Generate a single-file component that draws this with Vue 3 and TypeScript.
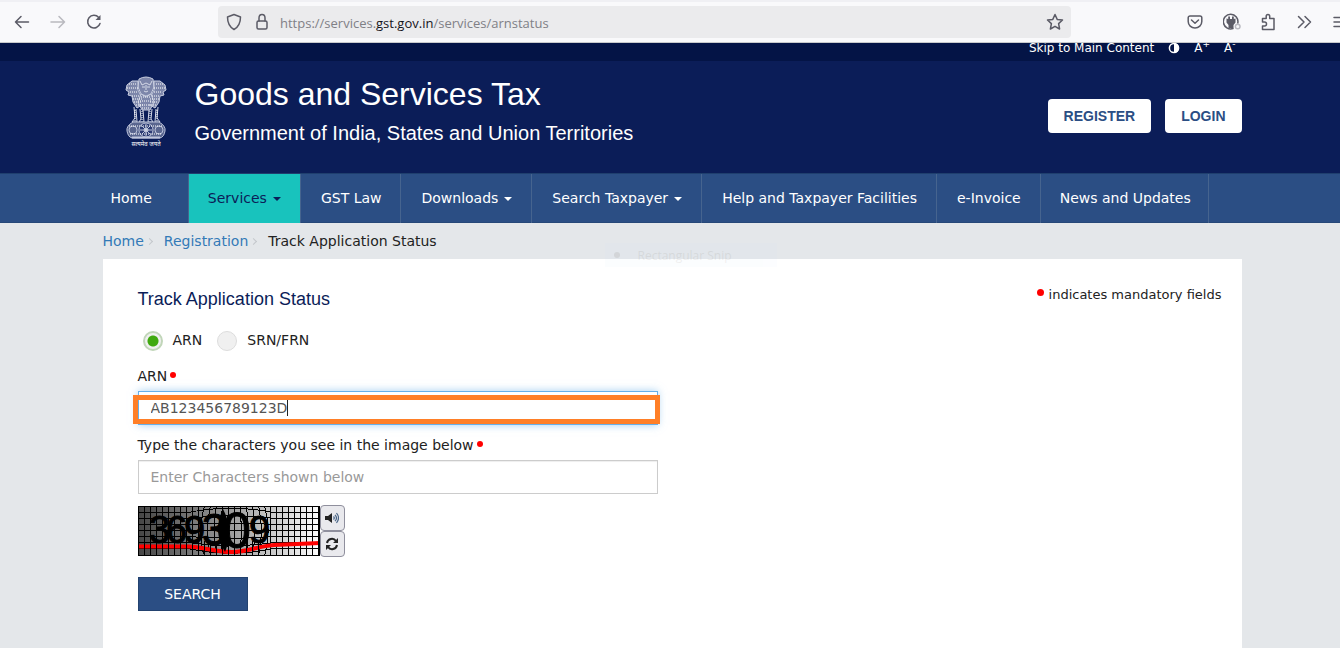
<script setup lang="ts">
import { ref } from 'vue'

interface NavItem {
  label: string
  menu?: boolean
  active?: boolean
}

const navItems: NavItem[] = [
  { label: 'Home' },
  { label: 'Services', menu: true, active: true },
  { label: 'GST Law' },
  { label: 'Downloads', menu: true },
  { label: 'Search Taxpayer', menu: true },
  { label: 'Help and Taxpayer Facilities' },
  { label: 'e-Invoice' },
  { label: 'News and Updates' },
]

const kind = ref<'arn' | 'srn'>('arn')
const arn = ref('AB123456789123D')
const captcha = ref('')

const gridX: number[] = Array.from({ length: 29 }, (_, i) => i * 6 + 6)
const gridY: number[] = Array.from({ length: 7 }, (_, i) => i * 6 + 6)
</script>

<template>
  <div class="screen">
    <div class="browser">
      <div class="tools">
        <button class="tool" aria-label="Back">
          <svg width="16" height="16" viewBox="0 0 16 16"><path d="M14.500 8H1.500M7 2.500L1.500 8L7 13.500" /></svg>
        </button>
        <button class="tool off" aria-label="Forward">
          <svg width="16" height="16" viewBox="0 0 16 16"><path d="M1 8h13.500M9 2.500L14.500 8L9 13.500" /></svg>
        </button>
        <button class="tool" aria-label="Reload">
          <svg width="16" height="16" viewBox="0 0 16 16">
            <path d="M14 9.500A6.300 6.300 0 1 1 12.700 3.500" /><path d="M14.500 1v5h-5z" class="solid" />
          </svg>
        </button>
      </div>
      <div class="address">
        <svg width="16" height="18" viewBox="0 0 16 18"><path d="M8 1.500L14.500 4C14.500 10 12.500 14 8 16.500C3.500 14 1.500 10 1.500 4Z" /></svg>
        <svg width="16" height="18" viewBox="0 0 16 18">
          <rect x="3" y="8" width="10" height="8" rx="1.500" /><path d="M5 8V5a3 3.500 0 0 1 6 0v3" />
        </svg>
        <span class="url">https://services.<b>gst.gov.in</b>/services/arnstatus</span>
        <svg class="star" width="18" height="18" viewBox="0 0 18 18">
          <path d="M9 1.500L11.200 6.400L16.500 7L12.600 10.600L13.600 16L9 13.300L4.400 16L5.400 10.600L1.500 7L6.800 6.400Z" />
        </svg>
      </div>
      <div class="extras">
        <svg width="16" height="16" viewBox="0 0 16 16">
          <path d="M3 2h10a1.800 1.800 0 0 1 1.800 1.800V7.500a6.800 6.500 0 0 1-13.600 0V3.800A1.800 1.800 0 0 1 3 2zM4.500 6L8 9.300L11.500 6" />
        </svg>
        <svg width="18" height="18" viewBox="0 0 18 18">
          <path d="M14.800 10A7.300 7.300 0 1 0 10 15.500" />
          <path d="M3.500 5.500L5.200 6V3.500h1.800v2.500h2V3.500h1.800V6l1.700-.5V9.500L10.500 12v3H5.500v-3L3.500 9.500z" class="solid" />
          <circle cx="14.700" cy="13.500" r="2.300" class="dot" />
        </svg>
        <svg width="16" height="18" viewBox="0 0 16 18">
          <path d="M1.500 9V5.500h3.700V3.300a1.700 1.700 0 0 1 3.500 0v2.200H13v11H1.500V13h2a1.900 1.900 0 0 0 0-4z" />
        </svg>
        <svg width="16" height="16" viewBox="0 0 16 16"><path d="M1.500 2.500L7 8L1.500 13.500M8 2.500L13.500 8L8 13.500" /></svg>
        <svg width="16" height="16" viewBox="0 0 16 16"><path d="M1 3.500h14M1 8h14M1 12.500h14" /></svg>
      </div>
    </div>

    <div class="page">
      <div class="topbar">
        <div class="wrap topline">
          <a href="#main">Skip to Main Content</a>
          <svg width="12" height="12" viewBox="0 0 12 12">
            <circle cx="6" cy="6" r="4.600" fill="none" stroke="#fff" stroke-width="1.500" /><path d="M6 1a5 5 0 0 1 0 10z" fill="#fff" />
          </svg>
          <a href="#larger">A<sup>+</sup></a>
          <a href="#smaller">A<sup>-</sup></a>
        </div>
      </div>

      <header class="head">
        <div class="wrap brandline">
          <svg class="emblem" width="44" height="72" viewBox="0 0 44 72" role="img" aria-label="Emblem of India">
            <g fill="#7d86aa" stroke="#c9cee0" stroke-width="1">
              <path d="M15 3Q22-1 29 3L30 11L27 18L22 20L17 18L14 11Z" />
              <path d="M14 5L8 5L3 9L2 14L5 16L4 19L8 20L9 26L13 32L18 29L17 20L14 14Z" />
              <path d="M30 5L36 5L41 9L42 14L39 16L40 19L36 20L35 26L31 32L26 29L27 20L30 14Z" />
              <path d="M17 18L14 26L18 34H26L30 26L27 18L22 21Z" />
            </g>
            <g fill="none" stroke="#d5d9e7" stroke-width="1">
              <path d="M16 5L18 9L22 7L26 9L28 5M18 11h3M23 11h3M20 15Q22 17 24 15M22 9v5" />
              <path d="M10 31L11 42L8 46H13L12 33M16 33L17 43L15 46H20L19 34M25 34L24 46H29L27 43L28 33M32 33L31 46H36L33 42L34 31" />
            </g>
            <g fill="#5a668f" stroke="#b9c0d8" stroke-width="1">
              <path d="M9 46H35Q42 50 41 55Q40 61 36 62H8Q4 61 3 55Q2 50 9 46Z" />
              <circle cx="9" cy="54" r="4" /><circle cx="35" cy="54" r="4" />
              <circle cx="22" cy="54" r="7" fill="#2c3b73" />
              <path d="M22 48v12M16 54h12M18 50l8 8M26 50l-8 8" fill="none" />
              <circle cx="22" cy="54" r="2" fill="#c9cee0" />
              <path d="M8 61H36V62H8Z" fill="#d8dcea" />
            </g>
            <g fill="none" stroke="#fff" stroke-width="1" stroke-dasharray="1 1">
              <path d="M5 8L12 8M3 12H14M6 16H14M8 20H16M9 23H18M10 26H18M12 29H19" />
              <path d="M32 8H39M30 12H41M30 16H38M28 20H36M26 23H35M26 26H34M25 29H32" />
              <path d="M17 21H27M16 25H28M16 29H28M18 32H26M11 34V45M18 35V45M26 35V45M33 34V45M5 50H39M6 58H38" />
            </g>
            <text x="22" y="70" text-anchor="middle" class="motto">सत्यमेव जयते</text>
          </svg>
          <div class="titles">
            <h1>Goods and Services Tax</h1>
            <p>Government of India, States and Union Territories</p>
          </div>
          <div class="account">
            <button>REGISTER</button>
            <button>LOGIN</button>
          </div>
        </div>
      </header>

      <nav class="nav">
        <div class="wrap menu">
          <a v-for="item in navItems" :key="item.label" href="#" :class="{ active: item.active }">
            {{ item.label }}<i v-if="item.menu" class="caret"></i>
          </a>
        </div>
      </nav>

      <main id="main" class="wrap">
        <div class="crumbs">
          <a href="#">Home</a><i class="chevron"></i><a href="#">Registration</a><i class="chevron"></i><span>Track Application Status</span>
        </div>
        <div class="ghost"><i></i><span>Rectangular Snip</span></div>

        <form class="card" @submit.prevent>
          <div class="cardhead">
            <h2>Track Application Status</h2>
            <p class="note"><i class="req big"></i>indicates mandatory fields</p>
          </div>
          <div class="radios">
            <label><input v-model="kind" type="radio" name="kind" value="arn" /><span>ARN</span></label>
            <label><input v-model="kind" type="radio" name="kind" value="srn" /><span>SRN/FRN</span></label>
          </div>
          <label class="lab" for="arn">ARN<i class="req"></i></label>
          <div class="field">
            <input id="arn" v-model="arn" class="focused" type="text" />
            <i class="cursor"></i>
            <i class="frame"></i>
          </div>
          <label class="lab second" for="captcha">Type the characters you see in the image below<i class="req"></i></label>
          <div class="field">
            <input id="captcha" v-model="captcha" type="text" placeholder="Enter Characters shown below" />
          </div>
          <div class="captcha">
            <svg width="182" height="50" viewBox="0 0 182 50" role="img" aria-label="Captcha">
              <defs>
                <linearGradient id="shade"><stop offset="0" stop-color="#454545" /><stop offset=".5" stop-color="#999" /><stop offset="1" stop-color="#fff" /></linearGradient>
              </defs>
              <rect width="182" height="50" fill="url(#shade)" />
              <g stroke="#000" stroke-width="1" fill="none" shape-rendering="crispEdges">
                <path v-for="x in gridX" :key="'x' + x" :d="x > 60 && x < 130 ? `M${x + .5} 0Q${x + (x - 95) / 4} 25 ${x + .5} 50` : `M${x + .5} 0V50`" />
                <path v-for="y in gridY" :key="'y' + y" :d="`M0 ${y + .5}H50Q92 ${y + (y - 22) / 2} 136 ${y + .5}H182`" />
              </g>
              <path d="M0 40.500H50C65 41 78 46 94 46S120 40 136 39L182 37" fill="none" stroke="#f00" stroke-width="4" />
              <g stroke="#000" stroke-width="1" shape-rendering="crispEdges"><path v-for="x in gridX.slice(0, 20)" :key="'r' + x" :d="`M${x + .5} 35v13`" /></g>
              <text class="digits" y="37" font-size="38">
                <tspan x="11">3</tspan><tspan x="28">6</tspan><tspan x="46">9</tspan><tspan x="64" y="39" font-size="44">3</tspan><tspan x="85" y="42" font-size="50">0</tspan><tspan x="111" y="37" font-size="38">9</tspan>
              </text>
              <path d="M85 3Q96 24 87 46Q74 25 85 3" fill="#000" />
              <path d="M0 .5H182M0 49.500H182M.5 0V50" stroke="#000" stroke-width="1" /><path d="M181 0V50" stroke="#000" stroke-width="2" />
            </svg>
            <div class="captools">
              <button type="button" aria-label="Play audio">
                <svg width="14" height="12" viewBox="0 0 14 12">
                  <path d="M0 4h3L7 1v10L3 8H0z" fill="#222" />
                  <path d="M8.500 4.500q1.500 1.500 0 3M10 2.800q3 3.200 0 6.400M11.500 1q4 5 0 10" fill="none" stroke="#4a6688" stroke-width="1.200" />
                </svg>
              </button>
              <button type="button" aria-label="Refresh">
                <svg width="14" height="14" viewBox="0 0 14 14">
                  <path d="M2 6a5 5 0 0 1 9-2M12 8a5 5 0 0 1-9 2" fill="none" stroke="#222" stroke-width="2" />
                  <path d="M13 1v5H8zM1 13V8h5z" fill="#222" />
                </svg>
              </button>
            </div>
          </div>
          <button class="search" type="submit">SEARCH</button>
        </form>
      </main>
    </div>
  </div>
</template>

<style>
body { margin: 0; background: #e4e7ea; }
</style>

<style scoped>
* { box-sizing: border-box; }
.screen {
  display: flex; flex-direction: column; height: 100vh; overflow: hidden;
  font: 14px/20px Verdana, "DejaVu Sans", sans-serif; color: #222; background: #e4e7ea;
}
h1, h2, p { margin: 0; font-weight: 400; }
a { text-decoration: none; }
button { font: inherit; cursor: pointer; }
.browser {
  flex: none; position: relative; z-index: 2; display: flex; align-items: center; height: 43px; padding: 0 0 0 14px;
  background: #f9f9fb; border-top: 2px solid #f0f0f4; border-bottom: 1px solid #c8cacc;
}
.browser svg { flex: none; fill: none; stroke: #5b5b66; stroke-width: 1.5; stroke-linejoin: round; stroke-linecap: round; }
.browser .solid { fill: #5b5b66; stroke: none; }
.browser .dot { fill: #f9f9fb; stroke: #b9b9c0; }
.tools { flex: none; display: flex; gap: 20px; width: 204px; }
.tool { display: flex; padding: 0; border: 0; background: none; }
.off { opacity: .4; }
.address {
  flex: 1; display: flex; align-items: center; gap: 12px; height: 32px; padding: 0 7px 0 8px;
  background: #ebebed; border-radius: 4px;
}
.url { font: 13px/20px "Segoe UI", "Open Sans", sans-serif; color: #808086; margin-left: -2px; padding-top: 2px; }
.url b { font-weight: 400; color: #15141a; }
.address .star { margin-left: auto; }
.extras { flex: none; display: flex; align-items: center; gap: 20px; width: 269px; padding-left: 116px; overflow: hidden; }

.page { flex: 1; min-height: 0; display: flex; flex-direction: column; }
.wrap { width: 85%; margin: 0 auto; position: relative; left: 2px; }
.topbar { flex: none; height: 18px; background: #041446; }
.topline { display: flex; justify-content: flex-end; align-items: center; gap: 14px; height: 10px; padding-right: 6px; font-size: 12px; line-height: 12px; }
.topline a { color: #fff; white-space: nowrap; }
.topline sup { font-size: 9px; line-height: 0; }
.head { flex: none; height: 112px; background: #0b1d58; }
.brandline { display: flex; align-items: flex-start; padding-top: 15px; }
.emblem { flex: none; margin-left: 21px; }
.motto { font: 6px "Noto Sans Devanagari", "Noto Sans", sans-serif; fill: #fff; }
.titles { margin-left: 27px; color: #fff; font-family: Arial, "Liberation Sans", sans-serif; }
.titles h1 { font-size: 32px; line-height: 36px; }
.titles p { font-size: 20px; line-height: 24px; margin-top: 9px; }
.account { margin: 23px 0 0 auto; display: flex; gap: 14px; }
.account button {
  height: 34px; padding: 0 16px; border: 0; border-radius: 4px; background: #fff; color: #2b4e84;
  font: bold 14px/34px Arial, "Liberation Sans", sans-serif;
}
.nav { flex: none; height: 50px; background: #2b4e84; border-top: 1px solid #1f3f6e; border-bottom: 1px solid #264878; }
.menu { display: flex; }
.menu a { height: 49px; padding: 0 19px 0 20px; line-height: 49px; color: #fff; border-right: 1px solid #46648f; white-space: nowrap; }
.menu a:first-child { padding: 0 36px 0 8px; }
.menu a:last-child { padding: 0 17px 0 19px; }
.menu .active { background: #18c3bd; color: #0b1d58; padding: 0 19px; }
.caret { display: inline-block; margin-left: 6px; border: 4px solid transparent; border-top-color: currentColor; border-bottom: 0; vertical-align: middle; }

.crumbs { display: flex; align-items: center; height: 36px; }
.crumbs a { color: #337ab7; }
.chevron { width: 5px; height: 5px; margin: 0 12px 0 3px; border: solid #c4c8cc; border-width: 1px 1px 0 0; transform: rotate(45deg); }
.ghost {
  position: absolute; z-index: 1; top: 20px; left: 502px; width: 172px; height: 24px; display: flex; align-items: center;
  font: 12px "Segoe UI", "Open Sans", sans-serif; color: #222; background: #cfe6f8; opacity: .07;
}
.ghost i { width: 6px; height: 6px; margin: 0 18px 0 9px; border-radius: 50%; background: #000; }
.card { background: #fff; padding: 29px 20px 64px 35px; min-height: 389px; }
.cardhead { display: flex; justify-content: space-between; height: 22px; }
.card h2 { font: 18px/22px Arial, "Liberation Sans", sans-serif; color: #0b1d58; }
.note { font-size: 13px; line-height: 14px; white-space: nowrap; }
.req { display: inline-block; width: 6px; height: 6px; margin-left: 3px; border-radius: 50%; background: #f00; vertical-align: 3px; }
.req.big { width: 7px; height: 7px; margin: 0 5px 0 0; }
.radios { display: flex; gap: 15px; margin: 20px 0 15px 5px; }
.radios label { display: flex; gap: 10px; }
.radios input {
  appearance: none; width: 20px; height: 20px; margin: 1px 0 0; border: 1px solid #ddd; border-radius: 50%; background: #f0f0f0;
}
.radios input:checked { border: 2px solid #c1d6b9; background: radial-gradient(circle, #3fa90f 5px, #f0f0f0 6px); }
.lab { display: block; margin-bottom: 5px; }
.second { margin-top: 10px; }
.field { position: relative; width: 520px; }
.field input {
  display: block; width: 100%; height: 34px; padding: 0 12px; border: 1px solid #ccc; background: #fff; outline: 0;
  font: inherit; color: #555; box-shadow: inset 0 1px 1px rgba(0, 0, 0, .07);
}
.field input::placeholder { color: #999; opacity: 1; }
.field .focused { border-color: #66afe9; box-shadow: 0 0 8px rgba(102, 175, 233, .6); }
.frame { position: absolute; inset: 4px -2px 1px -5px; border: 5px solid #ff7f27; pointer-events: none; }
.cursor { position: absolute; left: 149px; top: 9px; width: 1px; height: 16px; background: #222; }
.captcha { display: flex; margin-top: 12px; }
.captools { display: grid; margin-top: -1px; }
.captools button {
  display: flex; align-items: center; justify-content: center; width: 25px; height: 26px; padding: 0;
  background: #e9e9ed; border: 1px solid #8f8f9d; border-radius: 4px;
}
.digits { font-family: "Liberation Sans", sans-serif; fill: #000; stroke: #000; }
.search { margin-top: 20px; width: 110px; height: 34px; border: 1px solid #23426f; background: #2b4e84; color: #fff; padding: 0; }
</style>
